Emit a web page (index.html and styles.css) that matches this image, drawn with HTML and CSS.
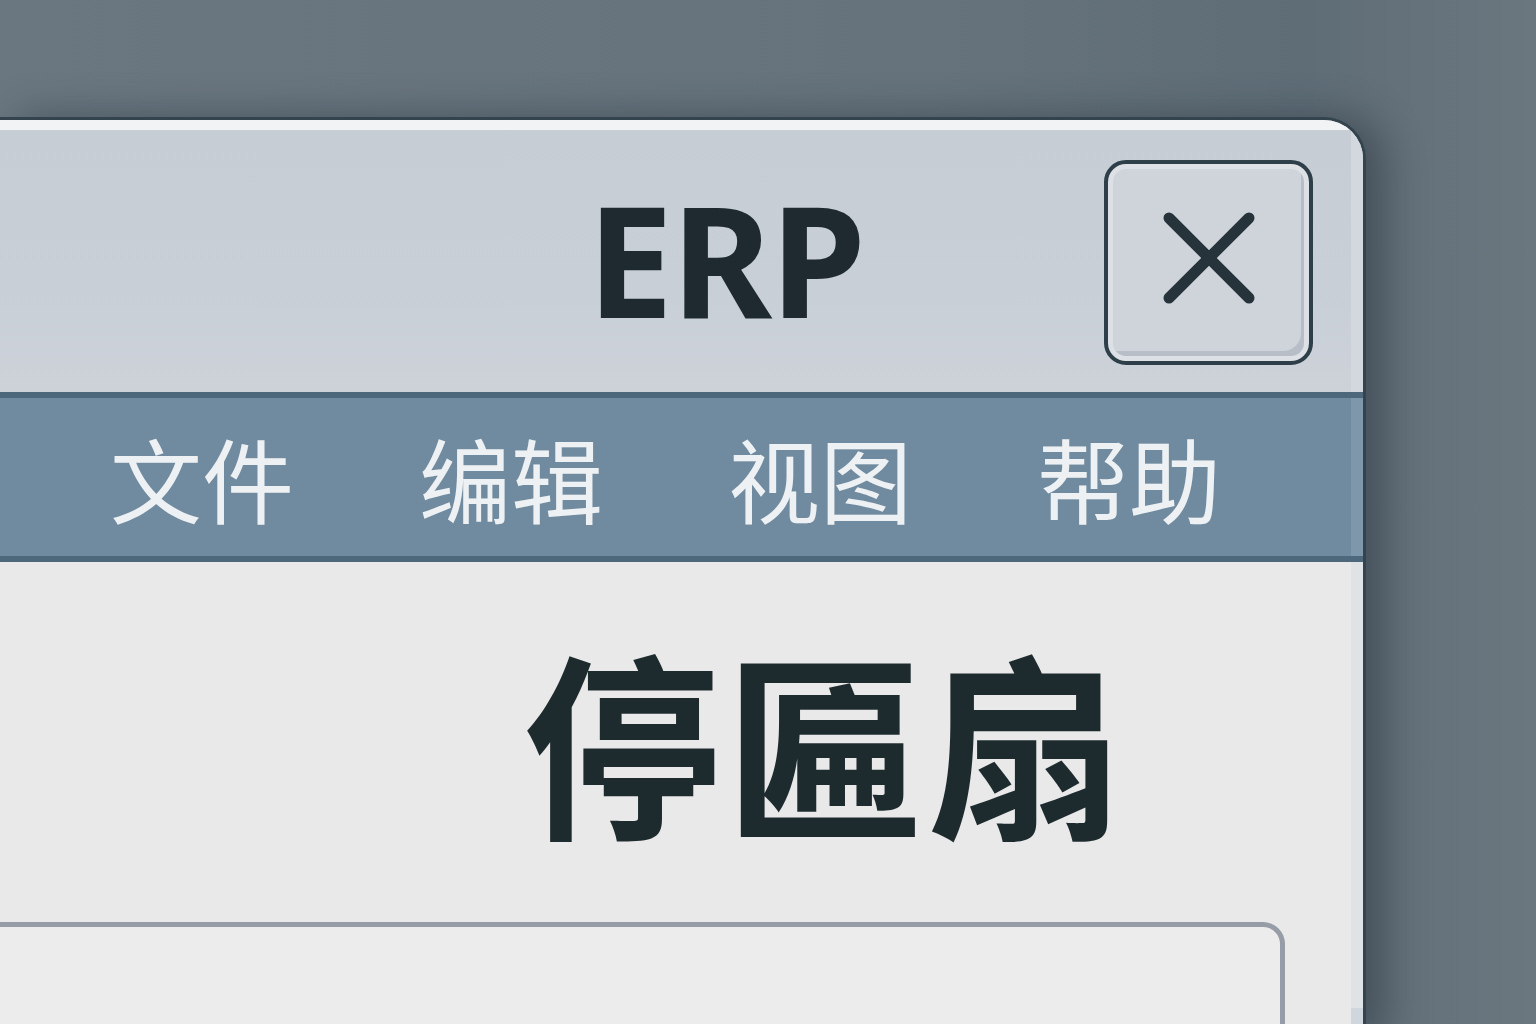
FILE: index.html
```html
<!DOCTYPE html>
<html lang="zh-CN">
<head>
    <meta charset="UTF-8">
    <meta name="viewport" content="width=device-width, initial-scale=1.0">
    <title>ERP</title>
    <link rel="stylesheet" href="styles.css">
</head>
<body>

    <div class="window">
        <div class="titlebar">
            <h1 class="title">ERP</h1>
            <button class="close" aria-label="关闭">
                <svg width="96" height="96" viewBox="0 0 96 96">
                    <path d="M8 8 L88 88 M88 8 L8 88" stroke="#26333b" stroke-width="11" stroke-linecap="round" fill="none"/>
                </svg>
            </button>
        </div>

        <nav class="menubar">
            <a href="#">文件</a>
            <a href="#">编辑</a>
            <a href="#">视图</a>
            <a href="#">帮助</a>
        </nav>

        <div class="content">
            <p class="heading">停匾扇</p>
            <div class="field"></div>
        </div>
    </div>

</body>
</html>
```

FILE: styles.css
```css
body {
    margin: 0;
    padding: 0;
    height: 1024px;
    overflow: hidden;
    font-family: "Noto Sans", "Noto Sans CJK SC", sans-serif;
    background: linear-gradient(90deg, #6b7780 0%, #66737c 60%, #5f6d77 85%, #6b777f 100%);
}

.window {
    margin-top: 117px;
    width: 1363px;
    height: 920px;
    border: 3px solid #34444f;
    border-left: none;
    border-bottom: none;
    border-top-right-radius: 42px;
    overflow: hidden;
    background-color: #e9e9e9;
    box-shadow: 18px 0 40px rgba(30, 42, 50, 0.45), inset -12px 0 0 #cfd6dd;
}

.titlebar {
    height: 262px;
    display: flex;
    align-items: center;
    justify-content: flex-end;
    padding-right: 50px;
    background: linear-gradient(180deg, #c7cdd5 0%, #c9cfd7 60%, #cdd2d9 100%);
    border-top: 10px solid #f1f3f5;
    box-shadow: inset -12px 0 0 #d3d8de;
}

.title {
    margin: 0 240px 0 0;
    font-size: 154px;
    font-weight: bold;
    color: #1e2a30;
    letter-spacing: -2px;
    line-height: 1;
    padding-bottom: 6px;
}

.close {
    width: 209px;
    height: 205px;
    margin-top: 2px;
    border: 4px solid #2f3f49;
    border-radius: 22px;
    background-color: #cfd4da;
    box-shadow: inset 0 0 0 5px #dde1e6, inset -8px -10px 0 #b7bec7;
    display: flex;
    align-items: center;
    justify-content: center;
    padding: 0;
    padding-bottom: 8px;
}

.menubar {
    height: 158px;
    display: flex;
    align-items: center;
    gap: 125px;
    padding-left: 110px;
    background-color: #708ba0;
    border-top: 6px solid #4d677b;
    border-bottom: 6px solid #4d677b;
    box-shadow: inset -12px 0 0 #7f97aa;
}

.menubar a {
    color: #eef1f3;
    text-decoration: none;
    font-size: 92px;
    line-height: 1;
    padding-top: 10px;
}

.content {
    height: 360px;
    padding-top: 86px;
    background-color: #e9e9e9;
    box-shadow: inset -12px 0 0 #dfe3e6;
}

.heading {
    margin: 0 0 0 523px;
    font-size: 198px;
    font-weight: bold;
    line-height: 1;
    color: #1d2a2e;
    letter-spacing: 4px;
}

.field {
    margin-top: 76px;
    width: 1280px;
    height: 200px;
    border: 5px solid #969da6;
    border-left: none;
    border-top-right-radius: 22px;
    background-color: #ececec;
}
```
